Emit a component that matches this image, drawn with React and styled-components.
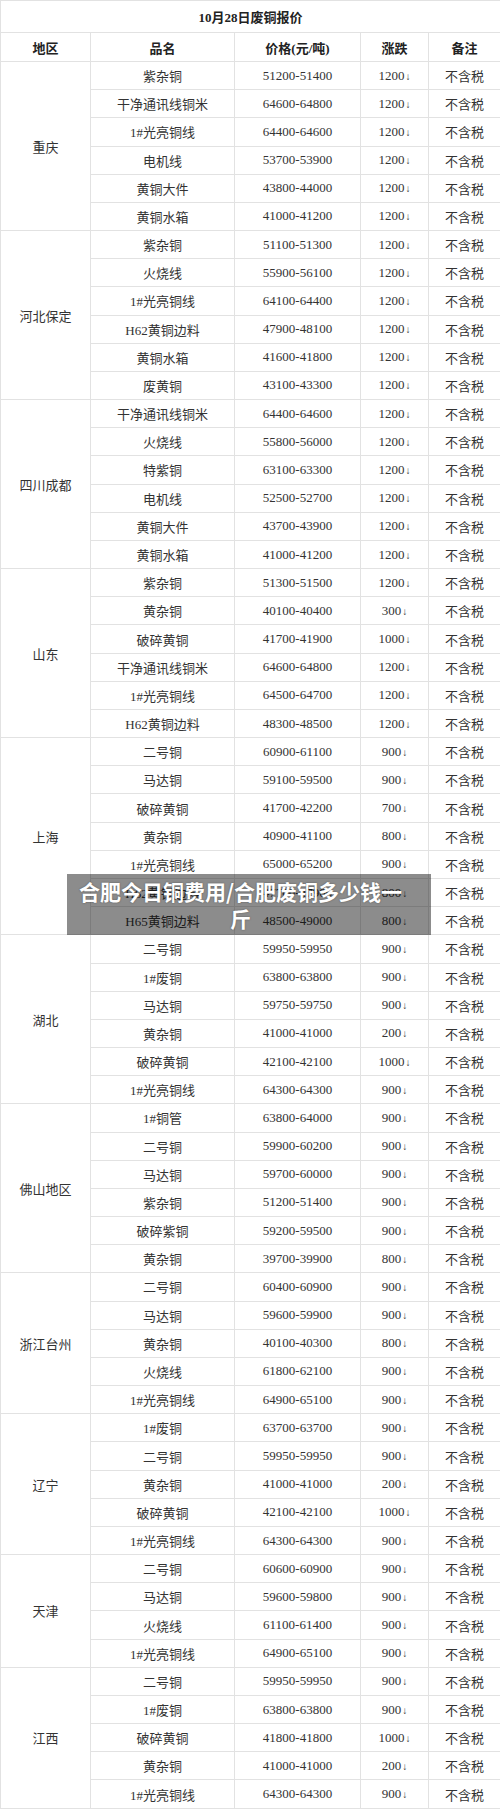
import React from 'react';
import styled, {createGlobalStyle} from 'styled-components';

const GlobalStyle = createGlobalStyle`
    html, body {
        margin: 0;
        padding: 0;
        background: #fff;
    }
    body {
        font-family: "Liberation Serif", "Noto Sans CJK SC", serif;
        color: #333;
    }
`

const Page = styled.div`
    position: relative;
    width: 500px;
`
const PriceTable = styled.table`
    width: 500px;
    border-collapse: collapse;
    table-layout: fixed;
    font-size: 13px;
`
const TitleCell = styled.th`
    height: 31px;
    border: 1px solid #e2e2e2;
    font-weight: bold;
    font-size: 13px;
    color: #222;
    text-align: center;
    padding: 0;
`
const HeadCell = styled.th`
    height: 28px;
    border: 1px solid #e2e2e2;
    font-weight: bold;
    color: #222;
    text-align: center;
    padding: 0;
`
const Cell = styled.td`
    height: 27.18px;
    border: 1px solid #e2e2e2;
    text-align: center;
    padding: 0;
    color: #333;
    white-space: nowrap;
`
const Arrow = styled.span`
    font-size: 10px;
    margin-left: 1px;
`
const Banner = styled.div`
    position: absolute;
    top: 874px;
    left: 67px;
    width: 364px;
    height: 61px;
    box-sizing: border-box;
    padding: 4px 28px 0 11px;
    background: rgba(0, 0, 0, 0.45);
    color: #fff;
    font-family: "Noto Sans CJK SC", sans-serif;
    font-weight: bold;
    font-size: 21px;
    line-height: 27px;
    text-align: center;
    text-shadow: 0 0 2px rgba(0, 0, 0, 0.4);
`

const data = [
    ['重庆', [
        ['紫杂铜', '51200-51400', '1200'],
        ['干净通讯线铜米', '64600-64800', '1200'],
        ['1#光亮铜线', '64400-64600', '1200'],
        ['电机线', '53700-53900', '1200'],
        ['黄铜大件', '43800-44000', '1200'],
        ['黄铜水箱', '41000-41200', '1200'],
    ]],
    ['河北保定', [
        ['紫杂铜', '51100-51300', '1200'],
        ['火烧线', '55900-56100', '1200'],
        ['1#光亮铜线', '64100-64400', '1200'],
        ['H62黄铜边料', '47900-48100', '1200'],
        ['黄铜水箱', '41600-41800', '1200'],
        ['废黄铜', '43100-43300', '1200'],
    ]],
    ['四川成都', [
        ['干净通讯线铜米', '64400-64600', '1200'],
        ['火烧线', '55800-56000', '1200'],
        ['特紫铜', '63100-63300', '1200'],
        ['电机线', '52500-52700', '1200'],
        ['黄铜大件', '43700-43900', '1200'],
        ['黄铜水箱', '41000-41200', '1200'],
    ]],
    ['山东', [
        ['紫杂铜', '51300-51500', '1200'],
        ['黄杂铜', '40100-40400', '300'],
        ['破碎黄铜', '41700-41900', '1000'],
        ['干净通讯线铜米', '64600-64800', '1200'],
        ['1#光亮铜线', '64500-64700', '1200'],
        ['H62黄铜边料', '48300-48500', '1200'],
    ]],
    ['上海', [
        ['二号铜', '60900-61100', '900'],
        ['马达铜', '59100-59500', '900'],
        ['破碎黄铜', '41700-42200', '700'],
        ['黄杂铜', '40900-41100', '800'],
        ['1#光亮铜线', '65000-65200', '900'],
        ['H62黄铜边料', '47700-47900', '800'],
        ['H65黄铜边料', '48500-49000', '800'],
    ]],
    ['湖北', [
        ['二号铜', '59950-59950', '900'],
        ['1#废铜', '63800-63800', '900'],
        ['马达铜', '59750-59750', '900'],
        ['黄杂铜', '41000-41000', '200'],
        ['破碎黄铜', '42100-42100', '1000'],
        ['1#光亮铜线', '64300-64300', '900'],
    ]],
    ['佛山地区', [
        ['1#铜管', '63800-64000', '900'],
        ['二号铜', '59900-60200', '900'],
        ['马达铜', '59700-60000', '900'],
        ['紫杂铜', '51200-51400', '900'],
        ['破碎紫铜', '59200-59500', '900'],
        ['黄杂铜', '39700-39900', '800'],
    ]],
    ['浙江台州', [
        ['二号铜', '60400-60900', '900'],
        ['马达铜', '59600-59900', '900'],
        ['黄杂铜', '40100-40300', '800'],
        ['火烧线', '61800-62100', '900'],
        ['1#光亮铜线', '64900-65100', '900'],
    ]],
    ['辽宁', [
        ['1#废铜', '63700-63700', '900'],
        ['二号铜', '59950-59950', '900'],
        ['黄杂铜', '41000-41000', '200'],
        ['破碎黄铜', '42100-42100', '1000'],
        ['1#光亮铜线', '64300-64300', '900'],
    ]],
    ['天津', [
        ['二号铜', '60600-60900', '900'],
        ['马达铜', '59600-59800', '900'],
        ['火烧线', '61100-61400', '900'],
        ['1#光亮铜线', '64900-65100', '900'],
    ]],
    ['江西', [
        ['二号铜', '59950-59950', '900'],
        ['1#废铜', '63800-63800', '900'],
        ['破碎黄铜', '41800-41800', '1000'],
        ['黄杂铜', '41000-41000', '200'],
        ['1#光亮铜线', '64300-64300', '900'],
    ]],
];

const App = () => {
    return (
        <Page>
            <GlobalStyle/>
            <PriceTable>
                <colgroup>
                    <col style={{width: 90}}/>
                    <col style={{width: 144}}/>
                    <col style={{width: 126}}/>
                    <col style={{width: 68}}/>
                    <col style={{width: 72}}/>
                </colgroup>
                <thead>
                    <tr><TitleCell colSpan={5}>10月28日废铜报价</TitleCell></tr>
                    <tr>
                        <HeadCell>地区</HeadCell>
                        <HeadCell>品名</HeadCell>
                        <HeadCell>价格(元/吨)</HeadCell>
                        <HeadCell>涨跌</HeadCell>
                        <HeadCell>备注</HeadCell>
                    </tr>
                </thead>
                <tbody>
                    {data.map(([region, rows]) => rows.map((row, i) => (
                        <tr key={region + i}>
                            {i === 0 && <Cell rowSpan={rows.length}>{region}</Cell>}
                            <Cell>{row[0]}</Cell>
                            <Cell>{row[1]}</Cell>
                            <Cell>{row[2]}<Arrow>↓</Arrow></Cell>
                            <Cell>不含税</Cell>
                        </tr>
                    )))}
                </tbody>
            </PriceTable>
            <Banner>合肥今日铜费用/合肥废铜多少钱一斤</Banner>
        </Page>
    );
};

export default App;
